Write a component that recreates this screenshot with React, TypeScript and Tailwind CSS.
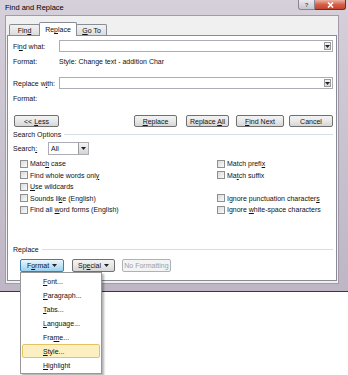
import React from 'react';

// underline the access key at position k
function Mn({ t, k }: { t: string; k: number }) {
  if (k < 0) return <span>{t}</span>;
  return (
    <span className="whitespace-pre">
      {t.slice(0, k)}
      <span className="underline underline-offset-1">{t[k]}</span>
      {t.slice(k + 1)}
    </span>
  );
}

function Btn({ t, k, w, className = '' }: { t: string; k: number; w: string; className?: string }) {
  return (
    <div
      className={`flex h-[12px] items-center justify-center rounded-[2px] border border-[#707070] bg-gradient-to-b from-[#f3f3f3] via-[#e8e8e8] to-[#d6d6d6] ${w} ${className}`}
    >
      <Mn t={t} k={k} />
    </div>
  );
}

function Check({ t, k }: { t: string; k: number }) {
  return (
    <div className="flex h-[11.5px] items-center gap-[2px]">
      <span className="h-[8px] w-[8px] border border-[#8e8f8f] bg-gradient-to-br from-[#dadada] to-[#fbfbfb]" />
      <Mn t={t} k={k} />
    </div>
  );
}

function Arrow() {
  return (
    <svg width="5" height="3" viewBox="0 0 5 3">
      <path d="M0 0h5L2.5 3z" fill="#222" />
    </svg>
  );
}

function Field() {
  return (
    <div className="flex h-[12px] flex-1 items-center justify-end border border-[#abadb3] bg-white pr-[1px]">
      <div className="flex h-[8px] w-[7px] items-center justify-center border border-[#9a9a9a] bg-gradient-to-b from-[#f4f4f4] to-[#d9d9d9]">
        <Arrow />
      </div>
    </div>
  );
}

const menu = [
  { t: 'Font...', k: 0 },
  { t: 'Paragraph...', k: 0 },
  { t: 'Tabs...', k: 0 },
  { t: 'Language...', k: 0 },
  { t: 'Frame...', k: 3 },
  { t: 'Style...', k: 0 },
  { t: 'Highlight', k: 0 },
];

export default function App() {
  return (
    <div className="relative h-[375px] w-[348px] overflow-hidden bg-white font-['Liberation_Sans',Arial,sans-serif] text-[7px] leading-none text-[#111]">
      {/* window */}
      <div className="flex h-[292px] flex-col border-b border-[#3b3540] bg-gradient-to-b from-[#d6d0db] via-[#c9c2cf] to-[#beb6c4] pb-[7px] pl-[5px] pr-[9px]">
        <div className="flex h-[15px] items-start">
          <span className="mt-[4px] text-[7.5px] text-black">Find and Replace</span>
          <div className="ml-auto mr-[-7px] flex">
            <div className="flex h-[10px] w-[17px] items-center justify-center rounded-bl-[3px] border border-t-0 border-[#8a8494] bg-gradient-to-b from-[#ece9ef] to-[#c9c5cf] text-[6px] font-bold text-[#555]">
              ?
            </div>
            <div className="flex h-[10px] w-[31px] items-center justify-center rounded-br-[3px] border border-l-0 border-t-0 border-[#7b2a20] bg-gradient-to-b from-[#eab1a4] via-[#d5604a] to-[#c3432c]">
              <svg width="7" height="6" viewBox="0 0 7 6">
                <path d="M1 0.5l5 5M6 0.5l-5 5" stroke="#fff" strokeWidth="1.6" />
              </svg>
            </div>
          </div>
        </div>

        <div className="flex flex-1 flex-col border border-[#a29aab] bg-[#f0f0f0] px-[1px] pb-[2px] pt-[6px]">
          {/* tabs */}
          <div className="flex h-[13px] items-end pl-[2px]">
            <div className="-mr-px flex h-[11px] w-[31px] items-center justify-center rounded-t-[2px] border border-b-0 border-[#898c95] bg-gradient-to-b from-[#f2f2f2] to-[#dcdcdc]">
              <Mn t="Find" k={3} />
            </div>
            <div className="relative z-10 -mb-px flex h-[14px] w-[38px] items-center justify-center rounded-t-[2px] border border-b-0 border-[#898c95] bg-white">
              <Mn t="Replace" k={2} />
            </div>
            <div className="-ml-px flex h-[11px] w-[31px] items-center justify-center rounded-t-[2px] border border-b-0 border-[#898c95] bg-gradient-to-b from-[#f2f2f2] to-[#dcdcdc]">
              <Mn t="Go To" k={0} />
            </div>
          </div>

          {/* page */}
          <div className="flex flex-1 flex-col border border-[#898c95] bg-white pl-[5px] pr-[3px]">
            <div className="mt-[4px] flex h-[12px] items-center">
              <span className="w-[46px]">
                <Mn t="Find what:" k={2} />
              </span>
              <Field />
            </div>
            <div className="mt-[4px] flex h-[10px] items-center">
              <span className="w-[46px]">Format:</span>
              <span>Style: Change text - addition Char</span>
            </div>
            <div className="mt-[11px] flex h-[12px] items-center">
              <span className="w-[46px]">
                <Mn t="Replace with:" k={9} />
              </span>
              <Field />
            </div>
            <div className="mt-[4px] flex h-[10px] items-center">
              <span className="w-[46px]">Format:</span>
            </div>

            <div className="mt-[12px] flex items-center pl-[1px]">
              <Btn t="<< Less" k={3} w="w-[45px]" />
              <Btn t="Replace" k={0} w="w-[43px]" className="ml-[75px]" />
              <Btn t="Replace All" k={8} w="w-[43px]" className="ml-[9px]" />
              <Btn t="Find Next" k={0} w="w-[48px]" className="ml-[7px]" />
              <Btn t="Cancel" k={-1} w="w-[44px]" className="ml-[5px]" />
            </div>

            <div className="mt-[2px] flex h-[10px] items-center gap-[3px]">
              <span>Search Options</span>
              <span className="h-px flex-1 bg-[#d5dfe5]" />
            </div>

            <div className="mt-[3px] flex h-[13px] items-center">
              <span className="w-[35px]">
                <Mn t="Search:" k={6} />
              </span>
              <div className="flex h-[13px] w-[41px] items-center border border-[#abadb3] bg-white pl-[2px]">
                <span>All</span>
                <div className="ml-auto flex h-[11px] w-[10px] items-center justify-center border-l border-[#9a9a9a] bg-gradient-to-b from-[#f4f4f4] to-[#d4d4d4]">
                  <Arrow />
                </div>
              </div>
            </div>

            <div className="mt-[3px] flex pl-[7px]">
              <div className="flex w-[197px] flex-col">
                <Check t="Match case" k={4} />
                <Check t="Find whole words only" k={20} />
                <Check t="Use wildcards" k={0} />
                <Check t="Sounds like (English)" k={9} />
                <Check t="Find all word forms (English)" k={9} />
              </div>
              <div className="flex flex-col">
                <Check t="Match prefix" k={11} />
                <Check t="Match suffix" k={2} />
                <div className="h-[11.5px]" />
                <Check t="Ignore punctuation characters" k={28} />
                <Check t="Ignore white-space characters" k={7} />
              </div>
            </div>

            <div className="mt-[29px] flex h-[10px] items-center gap-[3px]">
              <span>Replace</span>
              <span className="h-px flex-1 bg-[#d5dfe5]" />
            </div>

            <div className="mt-[4px] flex items-center pl-[7px]">
              <div className="flex h-[13px] w-[44px] items-center justify-center gap-[3px] rounded-[2px] border border-[#3c7fb1] bg-gradient-to-b from-[#eaf6fd] via-[#c4e5f6] to-[#98d1ef]">
                <Mn t="Format" k={1} />
                <Arrow />
              </div>
              <div className="ml-[8px] flex h-[13px] w-[43px] items-center justify-center gap-[3px] rounded-[2px] border border-[#707070] bg-gradient-to-b from-[#f3f3f3] via-[#e8e8e8] to-[#d6d6d6]">
                <Mn t="Special" k={2} />
                <Arrow />
              </div>
              <div className="ml-[7px] flex h-[13px] w-[49px] items-center justify-center rounded-[2px] border border-[#adb2b5] bg-[#f4f4f4] text-[#a0a0a0]">
                No Formatting
              </div>
            </div>
          </div>
        </div>
      </div>

      {/* Format dropdown */}
      <div className="absolute left-[20px] top-[272px] flex w-[82px] flex-col border border-[#979797] bg-white py-[1px] shadow-[2px_2px_2px_rgba(0,0,0,0.3)]">
        {menu.map((m) => (
          <div
            key={m.t}
            className={`mx-[1px] flex h-[14px] items-center rounded-[2px] pl-[20px] ${
              m.t === 'Style...' ? 'border border-[#e5c365] bg-[#fcefc1]' : 'border border-transparent'
            }`}
          >
            <Mn t={m.t} k={m.k} />
          </div>
        ))}
      </div>
    </div>
  );
}
